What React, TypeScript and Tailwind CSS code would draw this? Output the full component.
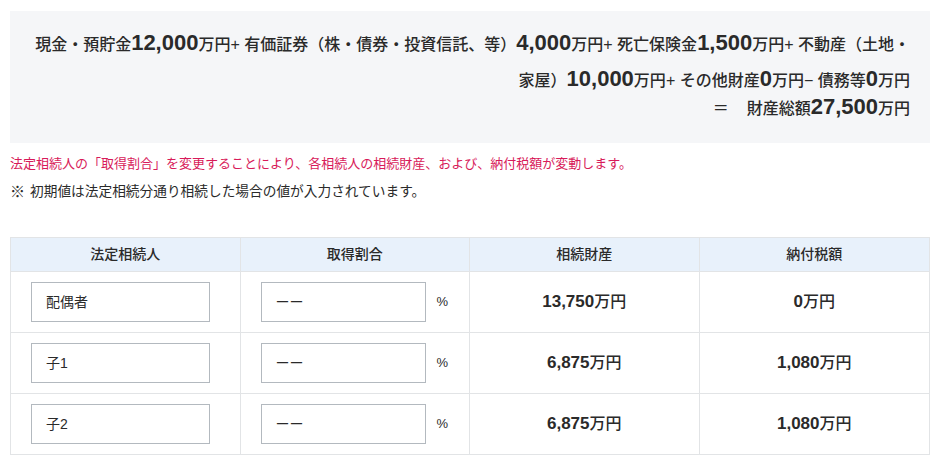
import React from "react";

const F = { fontFamily: '"Liberation Sans", "Noto Sans CJK JP", sans-serif' };

function Num({ n }: { n: string }) {
  return (
    <>
      <span className="text-[22px] font-bold">{n}</span>
      <span className="text-[16px]">万円</span>
    </>
  );
}

function Val({ n }: { n: string }) {
  return (
    <span>
      <span className="text-[17px] font-bold">{n}</span>
      <span className="text-[16px] font-medium">万円</span>
    </span>
  );
}

const rows = [
  { name: "配偶者", a: "13,750", b: "0" },
  { name: "子1", a: "6,875", b: "1,080" },
  { name: "子2", a: "6,875", b: "1,080" },
];

export default function App() {
  return (
    <div className="w-[940px] h-[464px] bg-white text-[#2a2a2a] overflow-hidden" style={F}>
      <div className="pt-[11px] px-[10px]">
        <div className="bg-[#f5f6f8] pl-[25px] pr-[20px] pt-[15px] pb-[25px] text-right text-[16px] font-medium">
          <p className="leading-[34px]">
            現金・預貯金<Num n="12,000" />+ 有価証券（株・債券・投資信託、等）<Num n="4,000" />+ 死亡保険金<Num n="1,500" />+ 不動産（土地・家屋）<Num n="10,000" />+ その他財産<Num n="0" />− 債務等<Num n="0" />
          </p>
          <p className="leading-[18px]">
            <span className="mr-[18px]">＝</span>財産総額<Num n="27,500" />
          </p>
        </div>
        <p className="mt-[12px] text-[13px] leading-[18px] text-[#d81b5a]">
          法定相続人の「取得割合」を変更することにより、各相続人の相続財産、および、納付税額が変動します。
        </p>
        <p className="mt-[9px] flex items-center text-[13.7px] leading-[20px]">
          <span className="w-[20px] text-[15px] font-bold">※</span>
          <span>初期値は法定相続分通り相続した場合の値が入力されています。</span>
        </p>
        <div className="mt-[35px] border border-[#e2e4e6] text-[14px]">
          <div className="grid grid-cols-4 bg-[#e8f1fb] h-[34px] items-center text-center border-b border-[#e2e4e6] font-medium">
            <div className="border-r border-[#e2e4e6] h-full flex items-center justify-center">法定相続人</div>
            <div className="border-r border-[#e2e4e6] h-full flex items-center justify-center">取得割合</div>
            <div className="border-r border-[#e2e4e6] h-full flex items-center justify-center">相続財産</div>
            <div className="h-full flex items-center justify-center">納付税額</div>
          </div>
          {rows.map((r, i) => (
            <div
              key={i}
              className={`grid grid-cols-4 ${i < rows.length - 1 ? "h-[61px] border-b border-[#e2e4e6]" : "h-[60px]"}`}
            >
              <div className="border-r border-[#e2e4e6] flex items-center pl-[20px]">
                <div className="w-[179px] h-[40px] border border-[#b3b9bf] flex items-center pl-[14px]">{r.name}</div>
              </div>
              <div className="border-r border-[#e2e4e6] flex items-center pl-[20px]">
                <div className="w-[165px] h-[40px] border border-[#b3b9bf] flex items-center pl-[14px]">ーー</div>
                <span className="ml-[11px] text-[13px]">%</span>
              </div>
              <div className="border-r border-[#e2e4e6] flex items-center justify-center">
                <Val n={r.a} />
              </div>
              <div className="flex items-center justify-center">
                <Val n={r.b} />
              </div>
            </div>
          ))}
        </div>
      </div>
    </div>
  );
}
